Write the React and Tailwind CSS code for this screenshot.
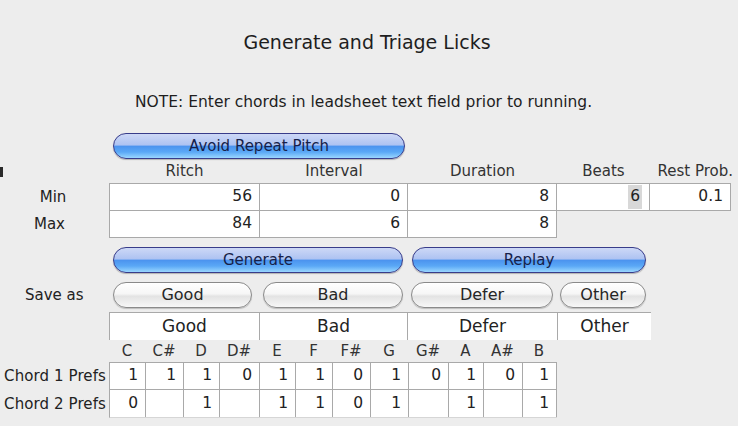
import React from "react";

const font = { fontFamily: '"DejaVu Sans", "Liberation Sans", sans-serif' };

function BlueButton({ children, className = "" }) {
  return (
    <div
      className={
        "flex h-[26px] items-center justify-center rounded-full border border-[#383c8a] bg-[linear-gradient(to_bottom,#cdd8f6_0%,#aec3f2_45%,#4c94ef_52%,#5aa8f6_75%,#9ad6ff_100%)] text-[15px] text-[#161f4a] shadow-[0_1px_1px_rgba(0,0,0,0.25)] " +
        className
      }
    >
      {children}
    </div>
  );
}

function GrayButton({ children, className = "" }) {
  return (
    <div
      className={
        "flex h-[26px] items-center justify-center rounded-full border border-[#8a8a8a] bg-[linear-gradient(to_bottom,#ffffff_0%,#f6f6f6_45%,#e3e3e3_55%,#f7f7f7_100%)] text-[16px] text-[#262626] shadow-[0_1px_1px_rgba(0,0,0,0.2)] " +
        className
      }
    >
      {children}
    </div>
  );
}

function Cell({ children, className = "" }) {
  return (
    <div
      className={
        "flex items-center justify-end bg-white pr-[7px] text-[15.5px] text-[#222] " +
        className
      }
    >
      {children}
    </div>
  );
}

const noteCols = [
  ["C", 36],
  ["C#", 38],
  ["D", 36],
  ["D#", 40],
  ["E", 36],
  ["F", 37],
  ["F#", 38],
  ["G", 38],
  ["G#", 40],
  ["A", 35],
  ["A#", 39],
  ["B", 34],
];

const chord1 = ["1", "1", "1", "0", "1", "1", "0", "1", "0", "1", "0", "1"];
const chord2 = ["0", "", "1", "", "1", "1", "0", "1", "", "1", "", "1"];

function ChordRow({ label, values, last }) {
  return (
    <div className={"flex " + (last ? "h-[28px]" : "h-[27px]")}>
      <div className="flex w-[109px] items-center justify-end pr-[3px] text-[15px] tracking-[0.1px] text-[#222]">
        {label}
      </div>
      <div className={"flex border-l border-[#a9a9a9] " + (last ? "border-b border-b-[#d6d6d6]" : "border-b")}>
        {noteCols.map(([n, w], i) => (
          <Cell key={n} className="h-full border-r border-[#a9a9a9]">
            <span style={{ width: w - 8 }} className="block text-right">
              {values[i]}
            </span>
          </Cell>
        ))}
      </div>
    </div>
  );
}

export default function App() {
  return (
    <div
      style={font}
      className="relative flex h-[426px] w-[738px] flex-col overflow-hidden bg-[#ededed] text-[#222]"
    >
      {/* title */}
      <div className="mt-[30px] h-[24px] text-center text-[19px] leading-[24px] text-[#1e1e1e]">
        <span className="ml-[-4px]">Generate and Triage Licks</span>
      </div>

      {/* note */}
      <div className="mt-[38px] h-[20px] pl-[135px] text-[15.5px] leading-[20px] text-[#1e1e1e]">
        NOTE: Enter chords in leadsheet text field prior to running.
      </div>

      {/* avoid repeat pitch */}
      <div className="mt-[21px] flex">
        <div className="w-[113px]" />
        <BlueButton className="w-[292px]">Avoid Repeat Pitch</BlueButton>
      </div>

      {/* column headings */}
      <div className="flex h-[24px] items-center text-[15px] text-[#333]">
        <div className="relative w-[109px]">
          <div className="absolute left-0 top-[-4px] h-[10px] w-[3px] bg-[#2a2a2a]" />
        </div>
        <div className="w-[151px] text-center">Ritch</div>
        <div className="w-[148px] text-center">Interval</div>
        <div className="w-[149px] text-center">Duration</div>
        <div className="w-[93px] text-center">Beats</div>
        <div className="w-[83px] whitespace-nowrap text-right">Rest Prob.</div>
      </div>

      {/* min row */}
      <div className="flex h-[28px]">
        <div className="flex w-[109px] items-center justify-center pr-[3px] text-[15px]">Min</div>
        <div className="flex border border-[#a9a9a9]">
          <Cell className="w-[150px] border-r border-[#a9a9a9]">56</Cell>
          <Cell className="w-[148px] border-r border-[#a9a9a9]">0</Cell>
          <Cell className="w-[149px] border-r border-[#a9a9a9]">8</Cell>
          <Cell className="w-[93px] border-r border-[#a9a9a9] pr-[5px]">
            <span className="bg-[#d8d8d8] px-[2px]">6</span>
          </Cell>
          <Cell className="w-[80px]">0.1</Cell>
        </div>
      </div>

      {/* max row */}
      <div className="flex h-[27px]">
        <div className="flex w-[109px] items-center justify-center pr-[10px] text-[15px]">Max</div>
        <div className="flex border border-t-0 border-[#a9a9a9]">
          <Cell className="w-[150px] border-r border-[#a9a9a9]">84</Cell>
          <Cell className="w-[148px] border-r border-[#a9a9a9]">6</Cell>
          <Cell className="w-[148px]">8</Cell>
        </div>
      </div>

      {/* generate / replay */}
      <div className="mt-[9px] flex">
        <div className="w-[113px]" />
        <BlueButton className="w-[290px]">Generate</BlueButton>
        <BlueButton className="ml-[9px] w-[234px]">Replay</BlueButton>
      </div>

      {/* save as buttons */}
      <div className="mt-[9px] flex">
        <div className="flex w-[113px] items-center pl-[25px] text-[15px]">Save as</div>
        <GrayButton className="w-[139px]">Good</GrayButton>
        <GrayButton className="ml-[11px] w-[140px]">Bad</GrayButton>
        <GrayButton className="ml-[8px] w-[142px]">Defer</GrayButton>
        <GrayButton className="ml-[7px] w-[86px]">Other</GrayButton>
      </div>

      {/* save-as text fields */}
      <div className="mt-[4px] flex h-[28px]">
        <div className="w-[109px]" />
        <div className="flex border-t border-l border-[#a9a9a9] text-[17px]">
          <div className="flex w-[150px] items-center justify-center border-r border-[#a9a9a9] bg-white">Good</div>
          <div className="flex w-[148px] items-center justify-center border-r border-[#a9a9a9] bg-white">Bad</div>
          <div className="flex w-[150px] items-center justify-center border-r border-[#a9a9a9] bg-white">Defer</div>
          <div className="flex w-[93px] items-center justify-center bg-white">Other</div>
        </div>
      </div>

      {/* note names */}
      <div className="flex h-[22px] items-center text-[15px] text-[#333]">
        <div className="w-[109px]" />
        {noteCols.map(([n, w]) => (
          <div key={n} style={{ width: w }} className="text-center">
            {n}
          </div>
        ))}
      </div>

      {/* chord preferences */}
      <div className="ml-[109px] w-[448px] border-t border-[#a9a9a9]" />
      <ChordRow label="Chord 1 Prefs" values={chord1} />
      <ChordRow label="Chord 2 Prefs" values={chord2} last />
    </div>
  );
}
